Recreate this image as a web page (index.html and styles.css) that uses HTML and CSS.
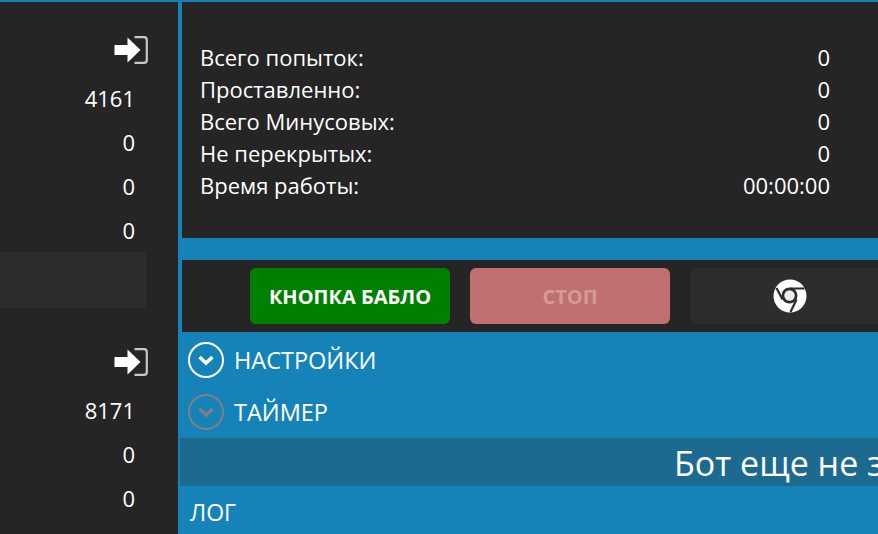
FILE: index.html
```html
<!DOCTYPE html>
<html lang="ru">
<head>
    <meta charset="UTF-8">
    <title>Кнопка бабло</title>
    <link rel="stylesheet" href="styles.css">
</head>
<body>
    <svg class="defs" width="0" height="0">
        <symbol id="sign-in" viewBox="0 0 34 28">
            <path d="M.5 9H13.500V1.500L26.500 14 13.500 26.500V19H.5z" fill="#fff"/>
            <path d="M20.500 1.200h9.500q2.800 0 2.800 2.800v20q0 2.800-2.800 2.800h-9.500" fill="none" stroke="#c8c8c8" stroke-width="2.200"/>
        </symbol>
        <symbol id="chevron-circle" viewBox="0 0 36 36">
            <circle cx="18" cy="18" r="17" fill="none" stroke="currentColor" stroke-width="2"/>
            <path d="M11.500 15l6.500 6 6.500-6" fill="none" stroke="currentColor" stroke-width="3.500"/>
        </symbol>
    </svg>

    <div class="app">
        <aside class="sidebar">
            <div class="account">
                <svg class="login-icon"><use href="#sign-in"/></svg>
                <div class="count">4161</div>
                <div class="count">0</div>
                <div class="count">0</div>
                <div class="count">0</div>
                <div class="account-field"></div>
            </div>
            <div class="account">
                <svg class="login-icon"><use href="#sign-in"/></svg>
                <div class="count">8171</div>
                <div class="count">0</div>
                <div class="count">0</div>
            </div>
        </aside>

        <main class="content">
            <section class="stats">
                <div class="stat-row"><span>Всего попыток:</span><span>0</span></div>
                <div class="stat-row"><span>Проставленно:</span><span>0</span></div>
                <div class="stat-row"><span>Всего Минусовых:</span><span>0</span></div>
                <div class="stat-row"><span>Не перекрытых:</span><span>0</span></div>
                <div class="stat-row"><span>Время работы:</span><span>00:00:00</span></div>
            </section>

            <div class="toolbar">
                <button class="btn btn-start">КНОПКА БАБЛО</button>
                <button class="btn btn-stop" disabled>СТОП</button>
                <button class="btn btn-browser" aria-label="Chrome">
                    <svg class="chrome-icon" viewBox="0 0 34 34">
                        <circle cx="17" cy="17" r="16.500" fill="#fff"/>
                        <circle cx="16.500" cy="16.500" r="8" fill="#2d2d2d"/>
                        <circle cx="16.500" cy="16.500" r="5.200" fill="#ececec"/>
                        <path d="M17 9.500H31.500M9.500 20.500L3.500 9M23.500 20.500L17.500 33" fill="none" stroke="#2d2d2d" stroke-width="2.200"/>
                    </svg>
                </button>
            </div>

            <div class="expanders">
                <div class="expander">
                    <svg class="expander-icon"><use href="#chevron-circle"/></svg>
                    <span>НАСТРОЙКИ</span>
                </div>
                <div class="expander expander-off">
                    <svg class="expander-icon"><use href="#chevron-circle"/></svg>
                    <span>ТАЙМЕР</span>
                </div>
            </div>

            <div class="status">Бот еще не запущен</div>
            <div class="log-title">ЛОГ</div>
        </main>
    </div>
</body>
</html>
```

FILE: styles.css
```css
* {
    box-sizing: border-box;
    margin: 0;
    padding: 0;
    font-family: 'Open Sans', 'Noto Sans', sans-serif;
}

body {
    background: #1583b8;
    color: #fff;
    height: 100vh;
    overflow: hidden;
}

.defs {
    display: block;
}

.app {
    display: flex;
    height: 100%;
    padding-top: 2px;
}

.sidebar {
    flex: none;
    width: 178px;
    background: #252526;
}

.account {
    display: flex;
    flex-direction: column;
    align-items: flex-end;
    height: 312px;
    padding-top: 34px;
}

.login-icon {
    width: 34px;
    height: 28px;
    margin-right: 30px;
    margin-bottom: 12px;
}

.count {
    height: 44px;
    line-height: 44px;
    margin-right: 43px;
    font-size: 22px;
}

.account-field {
    align-self: flex-start;
    width: 146px;
    height: 56px;
    background: #2d2d2d;
    border-radius: 0 4px 4px 0;
}

.content {
    flex: none;
    width: 1300px;
    margin-left: 4px;
}

.stats {
    height: 236px;
    padding: 39px 0 0 18px;
    background: #252526;
}

.stat-row {
    display: flex;
    justify-content: space-between;
    width: 630px;
    height: 32px;
    line-height: 32px;
    font-size: 22px;
}

.toolbar {
    display: flex;
    gap: 20px;
    height: 72px;
    margin-top: 22px;
    padding: 8px 0 8px 68px;
    background: #252526;
}

.btn {
    width: 200px;
    height: 56px;
    border: none;
    border-radius: 6px;
    font-size: 20px;
    font-weight: 700;
}

.btn-start {
    background: #008000;
    color: #fff;
}

.btn-stop {
    background: #c07070;
    color: #d99a97;
}

.btn-browser {
    display: flex;
    align-items: center;
    justify-content: center;
    background: #2d2d2d;
}

.chrome-icon {
    width: 34px;
    height: 34px;
}

.expanders {
    padding-top: 2px;
    margin-left: -4px;
}

.expander {
    display: flex;
    align-items: center;
    gap: 10px;
    height: 52px;
    padding-left: 10px;
    font-size: 23.500px;
}

.expander-icon {
    flex: none;
    width: 36px;
    height: 36px;
    color: #fff;
}

.expander-off .expander-icon {
    color: #7d7f86;
}

.status {
    height: 48px;
    margin-left: -2px;
    padding-left: 494px;
    line-height: 50px;
    font-size: 34px;
    white-space: nowrap;
    background: #1d6a90;
}

.log-title {
    height: 48px;
    padding: 10px 0 0 8px;
    font-size: 23px;
}
```
